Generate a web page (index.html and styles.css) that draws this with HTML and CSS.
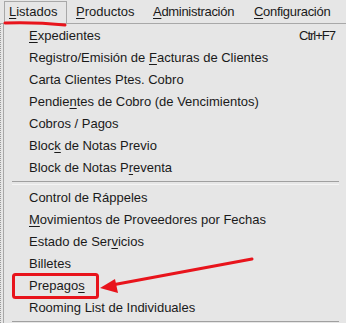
FILE: index.html
```html
<!DOCTYPE html>
<html lang="es">
<head>
<meta charset="utf-8">
<title>Listados</title>
<link rel="stylesheet" href="styles.css">
</head>
<body>
<div class="menubar">
  <div class="mitem m-list open"><u>L</u>istados</div>
  <div class="mitem m-prod"><u>P</u>roductos</div>
  <div class="mitem m-admin"><u>A</u>dministración</div>
  <div class="mitem m-conf"><u>C</u>onfiguración</div>
</div>
<div class="frame">
  <div class="dropdown">
    <div class="row"><span><u>E</u>xpedientes</span><span class="key">Ctrl+F7</span></div>
    <div class="row"><span>Registro/Emisión de <u>F</u>acturas de Clientes</span></div>
    <div class="row"><span>Carta Clientes Ptes. Cobro</span></div>
    <div class="row"><span>Pendie<u>n</u>tes de Cobro (de Vencimientos)</span></div>
    <div class="row"><span>Cobros / Pagos</span></div>
    <div class="row"><span>Bloc<u>k</u> de Notas Previo</span></div>
    <div class="row"><span>Block de Notas P<u>r</u>eventa</span></div>
    <div class="sep"></div>
    <div class="row"><span>Control de Ráppeles</span></div>
    <div class="row"><span><u>M</u>ovimientos de Proveedores por Fechas</span></div>
    <div class="row"><span>Estado de Ser<u>v</u>icios</span></div>
    <div class="row"><span>Billetes</span></div>
    <div class="row"><span>Prepago<u>s</u></span></div>
    <div class="row"><span>Rooming List de Individuales</span></div>
    <div class="sep"></div>
  </div>
</div>
<svg class="annot" width="346" height="323" viewBox="0 0 346 323" xmlns="http://www.w3.org/2000/svg">
  <path d="M5 23 Q35 22 65 25" fill="none" stroke="#e8141c" stroke-width="3" stroke-linecap="round"/>
  <rect x="13.5" y="274.5" width="84" height="23" rx="2" fill="none" stroke="#e8141c" stroke-width="3"/>
  <path d="M252 259 L112 285" fill="none" stroke="#e8141c" stroke-width="3" stroke-linecap="round"/>
  <polygon points="100,288 115,279 118,293" fill="#e8141c"/>
</svg>
</body>
</html>
```

FILE: styles.css
```css
* { box-sizing: border-box; }
html, body { margin: 0; padding: 0; }
body {
  width: 346px;
  height: 323px;
  overflow: hidden;
  background: #e6e6e6;
  font-family: "Liberation Sans", Arial, sans-serif;
  font-size: 13px;
  color: #1a1a1a;
  position: relative;
}
u { text-decoration: underline; text-underline-offset: 2px; }

.menubar {
  display: flex;
  height: 24px;
  padding-left: 4px;
  border-bottom: 1px solid #a8a8a8;
}
.mitem {
  line-height: 22px;
  white-space: nowrap;
  padding-top: 1px;
}
.m-list {
  width: 63px;
  margin-top: 1px;
  height: 22px;
  padding: 0 0 0 4px;
  line-height: 20px;
  border: 1px solid #a8a8a8;
  border-bottom: none;
}
.m-prod { margin-left: 9px; width: 77px; }
.m-admin { width: 101px; letter-spacing: -0.3px; }
.m-conf { flex: 1; letter-spacing: -0.3px; }

.frame {
  padding-left: 2px;
  border-left: 1px dotted #9a9a9a;
}
.dropdown {
  border-left: 1px solid #a8a8a8;
  padding-top: 1px;
}
.row {
  display: flex;
  justify-content: space-between;
  height: 22px;
  line-height: 22px;
  padding-left: 25px;
  padding-right: 11px;
  white-space: nowrap;
}
.key { letter-spacing: -1px; }
.sep {
  height: 8px;
  margin: 0 7px 0 8px;
  padding-top: 2px;
}
.sep::before {
  content: "";
  display: block;
  height: 2px;
  border-top: 1px solid #a0a0a0;
  border-bottom: 1px solid #f4f4f4;
}
.annot {
  position: absolute;
  left: 0;
  top: 0;
  pointer-events: none;
}
```
